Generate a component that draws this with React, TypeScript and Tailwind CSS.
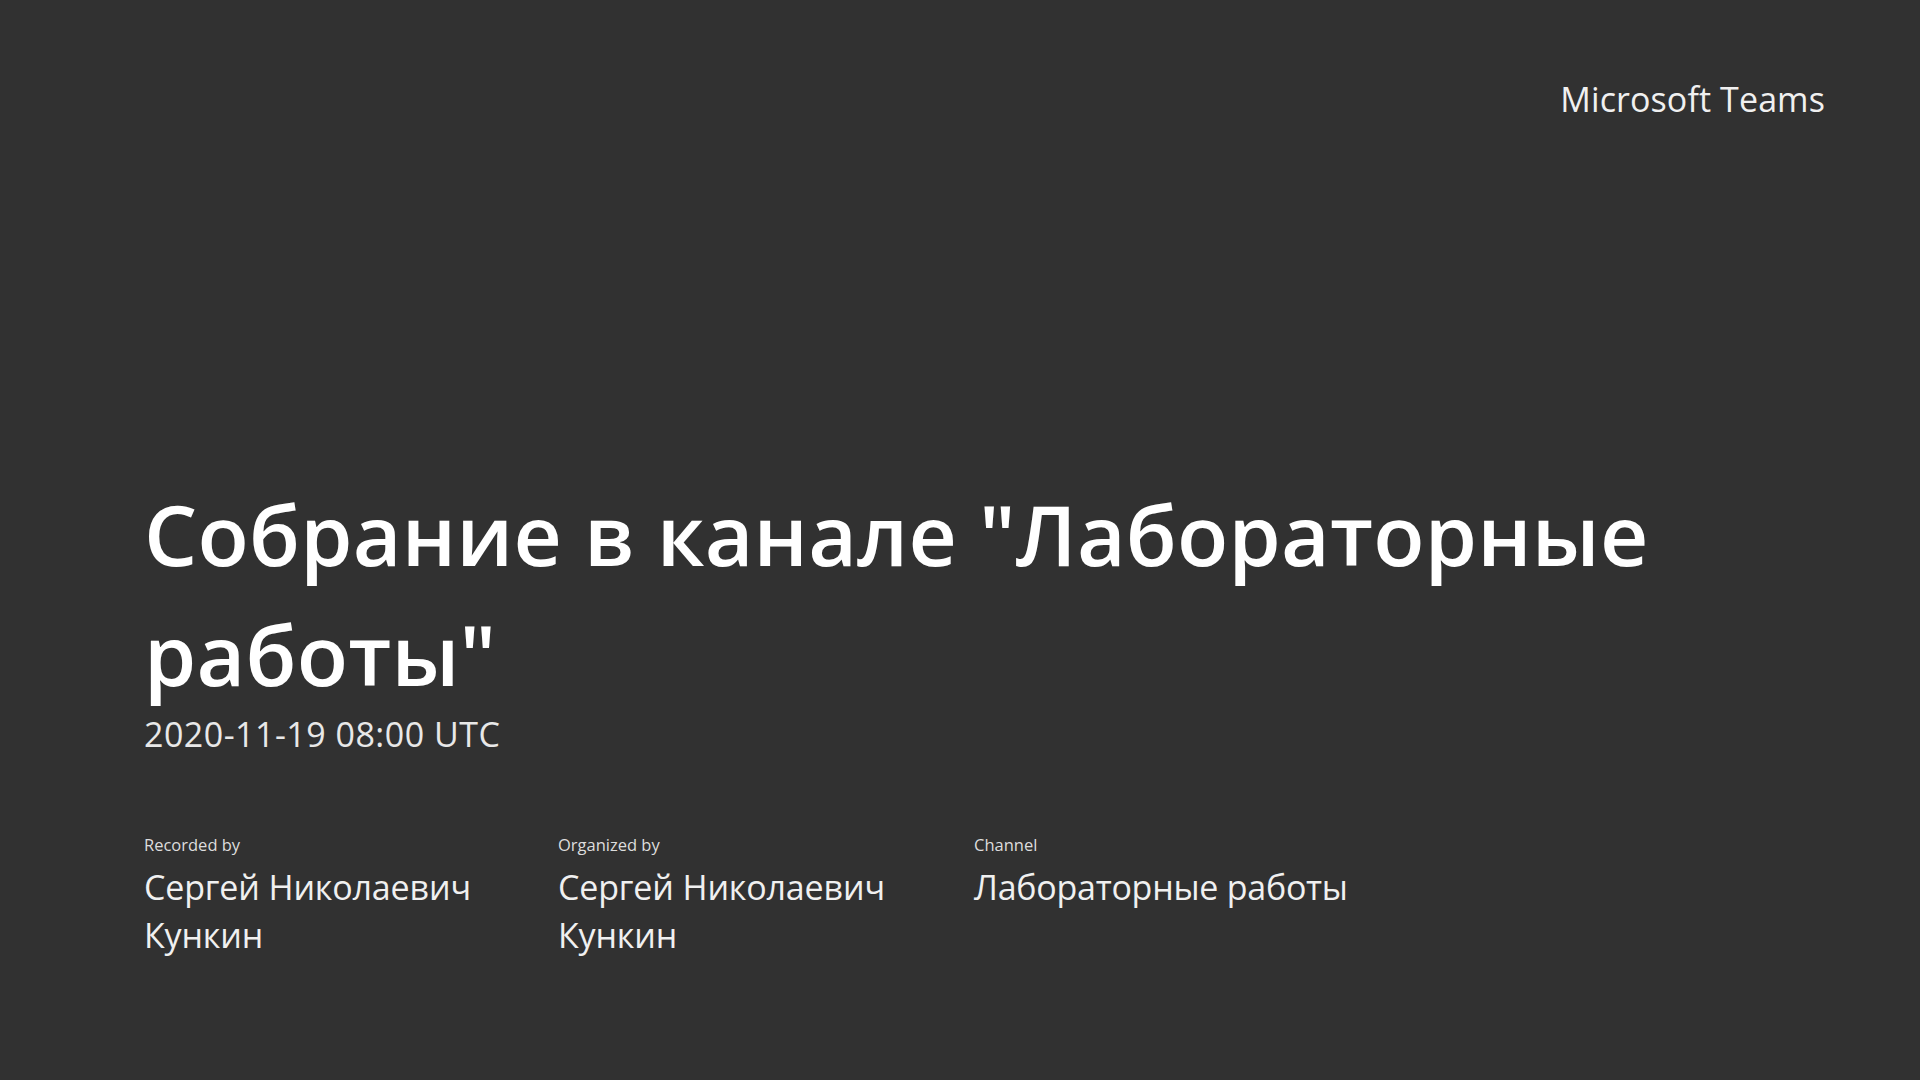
export default function App() {
  return (
    <div className="w-[1920px] h-[1080px] bg-[#313131] text-white flex flex-col overflow-hidden font-['Open_Sans','Noto_Sans',sans-serif]">
      <div className="flex justify-end pt-[78px] pr-[95px]">
        <span className="text-[34px] leading-[42px] tracking-[0.1px] text-[#f0f0f0]">Microsoft Teams</span>
      </div>
      <div className="flex-1 flex flex-col justify-end pl-[144px] pr-[180px] pb-[121px]">
        <h1 className="text-[84px] leading-[120px] tracking-[0.2px] font-semibold">Собрание в канале "Лабораторные работы"</h1>
        <p className="text-[34px] leading-[40px] tracking-[0.48px] text-[#e8e8e8]">2020-11-19 08:00 UTC</p>
        <div className="flex mt-[80px]">
          <div className="w-[414px]">
            <div className="text-[16.5px] leading-[22px] text-[#dddddd]">Recorded by</div>
            <div className="text-[34px] leading-[48px] tracking-[-0.15px] mt-[7px] w-[350px] text-[#f0f0f0]">Сергей Николаевич Кункин</div>
          </div>
          <div className="w-[416px]">
            <div className="text-[16.5px] leading-[22px] text-[#dddddd]">Organized by</div>
            <div className="text-[34px] leading-[48px] tracking-[-0.15px] mt-[7px] w-[350px] text-[#f0f0f0]">Сергей Николаевич Кункин</div>
          </div>
          <div>
            <div className="text-[16.5px] leading-[22px] text-[#dddddd]">Channel</div>
            <div className="text-[34px] leading-[48px] tracking-[-0.25px] mt-[7px] text-[#f0f0f0]">Лабораторные работы</div>
          </div>
        </div>
      </div>
    </div>
  )
}
